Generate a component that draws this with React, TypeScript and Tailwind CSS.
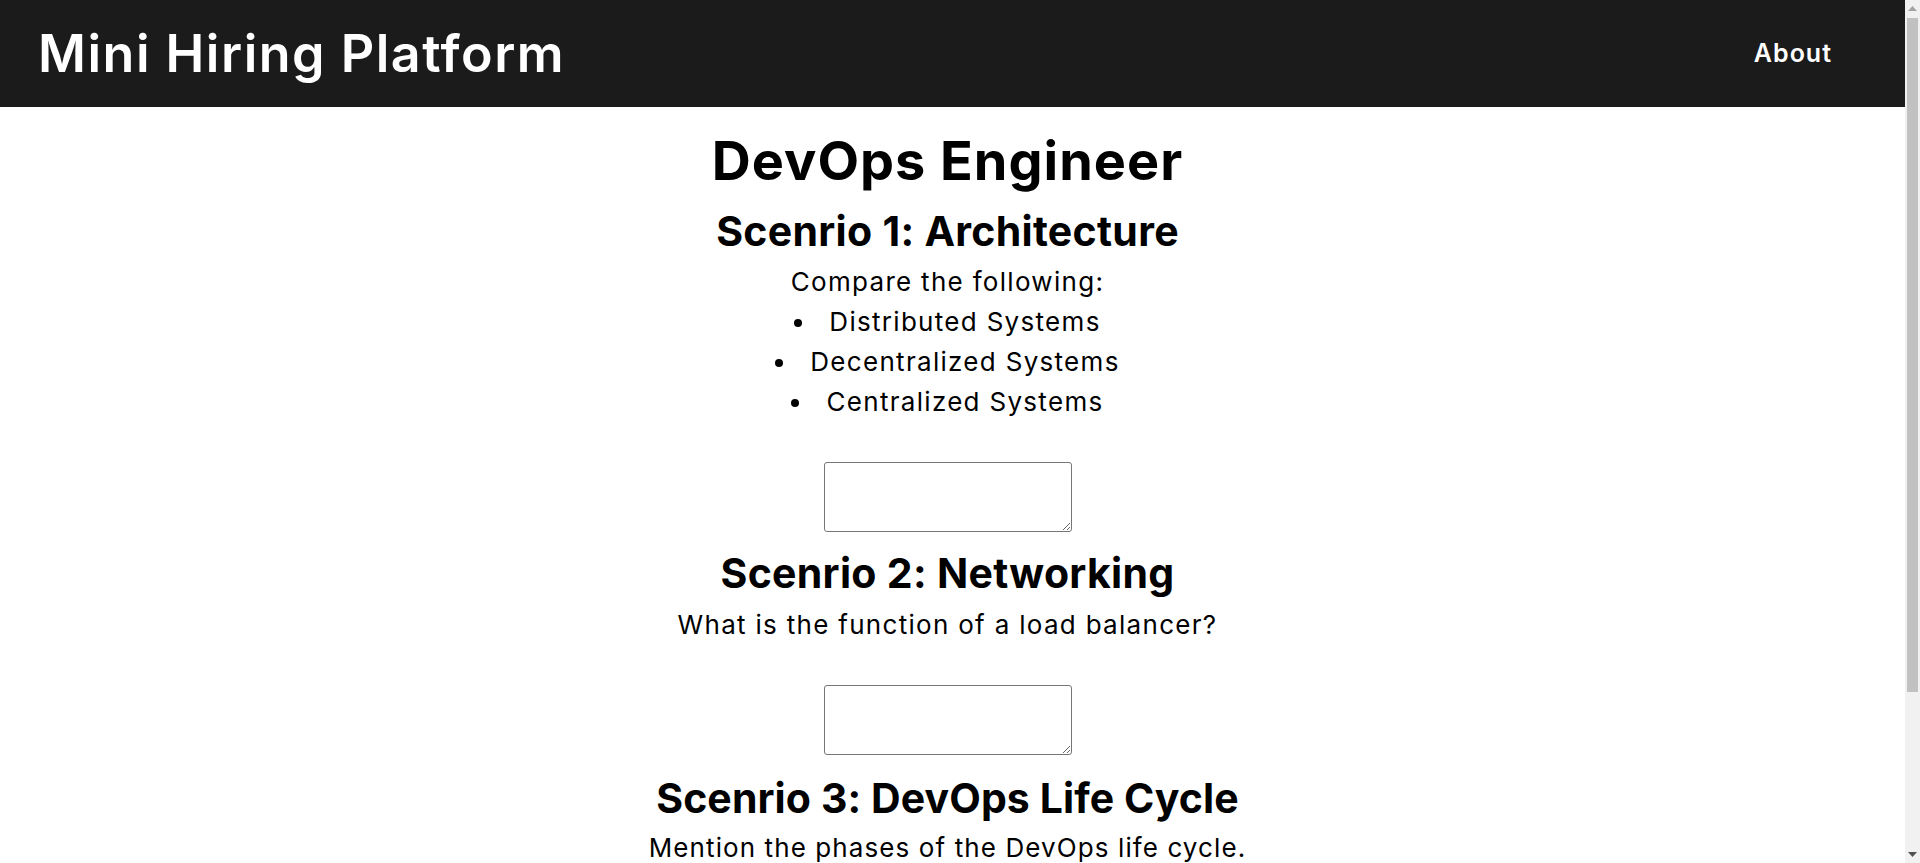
import React from "react";

function Answer({ className = "" }: { className?: string }) {
  return (
    <textarea
      className={`block w-[248px] h-[70px] border border-[#767676] rounded-[3px] bg-white ${className}`}
    />
  );
}

function FakeScrollbar() {
  return (
    <div className="fixed right-0 top-0 h-screen w-[15px] bg-[#f1f1f1] flex flex-col">
      <div className="h-[17px] flex items-center justify-center">
        <svg width="9" height="5" viewBox="0 0 9 5">
          <polygon points="4.5,0 9,5 0,5" fill="#a3a3a3" />
        </svg>
      </div>
      <div className="flex-1 px-[2px] pt-[1px]">
        <div className="h-[674px] bg-[#c1c1c1]" />
      </div>
      <div className="h-[17px] flex items-center justify-center">
        <svg width="9" height="5" viewBox="0 0 9 5">
          <polygon points="0,0 9,0 4.5,5" fill="#505050" />
        </svg>
      </div>
    </div>
  );
}

export default function App() {
  return (
    <div
      className="min-h-screen bg-white text-black pr-[15px]"
      style={{ fontFamily: "Inter, 'Noto Sans', sans-serif" }}
    >
      <header className="h-[107px] bg-[#1b1b1b] flex items-center justify-between pl-[38px] pr-[73px]">
        <h1 className="text-white text-[52px] font-semibold leading-none tracking-[1.5px]">
          Mini Hiring Platform
        </h1>
        <a className="text-white text-[25px] font-semibold leading-none tracking-[1px]">About</a>
      </header>

      <main className="flex flex-col items-center text-center pr-[10px] pb-[30px]">
        <h1 className="mt-[27px] text-[54px] leading-[54px] font-bold tracking-[1px]">DevOps Engineer</h1>

        <h2 className="mt-[23px] text-[41px] leading-[41px] font-bold tracking-[0.3px]">Scenrio 1: Architecture</h2>
        <p className="mt-[10px] text-[26px] leading-[40px] tracking-[1.3px]">Compare the following:</p>
        <ul className="list-disc list-inside text-[26px] leading-[40px] tracking-[1.3px]">
          <li>Distributed Systems</li>
          <li>Decentralized Systems</li>
          <li>Centralized Systems</li>
        </ul>
        <Answer className="mt-[40px]" />

        <h2 className="mt-[21px] text-[41px] leading-[41px] font-bold tracking-[0.3px]">Scenrio 2: Networking</h2>
        <p className="mt-[11px] text-[26px] leading-[40px] tracking-[1.3px]">What is the function of a load balancer?</p>
        <Answer className="mt-[40px]" />

        <h2 className="mt-[23px] text-[41px] leading-[41px] font-bold tracking-[0.1px]">Scenrio 3: DevOps Life Cycle</h2>
        <p className="mt-[9px] text-[26px] leading-[40px] tracking-[1.1px]">Mention the phases of the DevOps life cycle.</p>
        <Answer className="mt-[40px]" />

        <button className="mt-[20px] h-[36px] px-[20px] bg-[#1b1b1b] text-white text-[18px] rounded-[4px]">
          Submit
        </button>
      </main>

      <FakeScrollbar />
    </div>
  );
}
